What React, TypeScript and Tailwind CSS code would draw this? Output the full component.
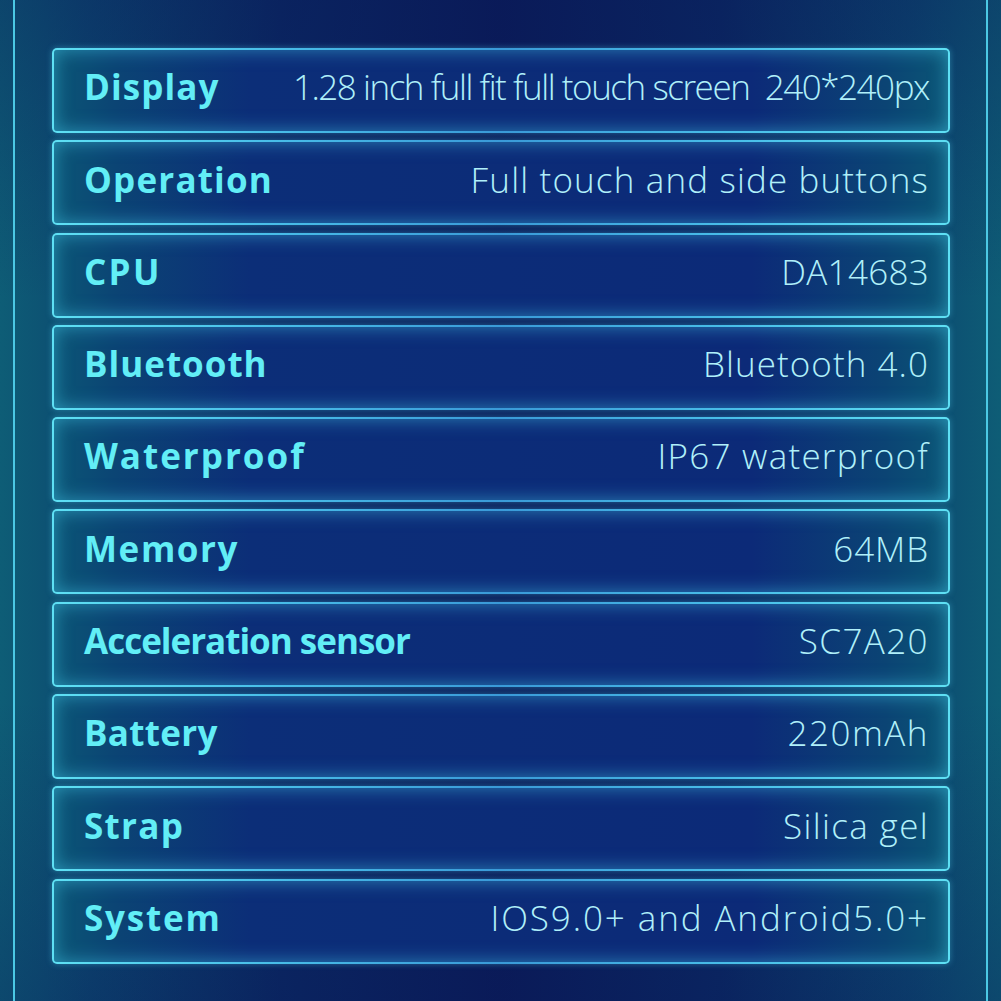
import React from 'react';

// per-row tracking, the source image was pieced together so spacing differs row to row
const specs = [
  { label: 'Display', value: '1.28 inch full fit full touch screen  240*240px', lt: 'tracking-[1.1px]', vt: 'tracking-[-1.45px]' },
  { label: 'Operation', value: 'Full touch and side buttons', lt: 'tracking-[1.2px]', vt: 'tracking-[1.15px]' },
  { label: 'CPU', value: 'DA14683', lt: 'tracking-[2.3px]', vt: 'tracking-[0.3px]' },
  { label: 'Bluetooth', value: 'Bluetooth 4.0', lt: 'tracking-[1px]', vt: 'tracking-[1.05px]' },
  { label: 'Waterproof', value: 'IP67 waterproof', lt: 'tracking-[2px]', vt: 'tracking-[1.25px]' },
  { label: 'Memory', value: '64MB', lt: 'tracking-[1.6px]', vt: 'tracking-[0.9px]' },
  { label: 'Acceleration sensor', value: 'SC7A20', lt: 'tracking-[-1px]', vt: 'tracking-[1.4px]' },
  { label: 'Battery', value: '220mAh', lt: 'tracking-[0.3px]', vt: 'tracking-[1.5px]' },
  { label: 'Strap', value: 'Silica gel', lt: 'tracking-[1.3px]', vt: 'tracking-[1.35px]' },
  { label: 'System', value: 'IOS9.0+ and Android5.0+', lt: 'tracking-[1.8px]', vt: 'tracking-[1.9px]' },
];

const font = { fontFamily: '"Open Sans", "Noto Sans", sans-serif' };

function SpecRow({ label, value, lt, vt }: { label: string; value: string; lt: string; vt: string }) {
  return (
    <div className="h-[85px] flex rounded-[5px] p-[2px] bg-[linear-gradient(to_right,#5ee0f4_0%,#48bde8_25%,#3a9ad8_50%,#48bde8_75%,#5ee0f4_100%)] shadow-[0_0_6px_rgba(80,210,240,0.4)]">
      <div className="flex-1 flex items-center justify-between rounded-[3px] pl-[30px] pr-[19px] pb-[6px] bg-[linear-gradient(to_right,#0b5676_0%,#0b4474_7%,#0c2e78_22%,#0c2a78_78%,#0b4474_93%,#0b5676_100%)] shadow-[inset_0_0_18px_rgba(70,200,235,0.55)]">
        <span className={`text-[35px] font-bold text-[#62eef6] ${lt}`} style={font}>
          {label}
        </span>
        <span className={`text-[35px] font-light text-[#b0f0fa] whitespace-pre ${vt}`} style={font}>
          {value}
        </span>
      </div>
    </div>
  );
}

export default function App() {
  return (
    <div className="w-[1001px] h-[1001px] overflow-hidden bg-[linear-gradient(to_right,#0e5d76_0%,#0c4870_9%,#0a2862_28%,#0a1b58_50%,#0a2862_72%,#0c4870_91%,#0e5d76_100%)]">
      <div className="h-full px-[13px] bg-[linear-gradient(to_bottom,rgba(10,25,90,0.35)_0%,rgba(10,40,100,0)_30%,rgba(10,40,100,0)_70%,rgba(10,25,90,0.3)_100%)]">
        <div className="h-full border-x-2 border-[#4cc8e4] pl-[37px] pr-[36px] pt-[48px] flex flex-col gap-[7.3px]">
          {specs.map((s) => (
            <SpecRow key={s.label} label={s.label} value={s.value} lt={s.lt} vt={s.vt} />
          ))}
        </div>
      </div>
    </div>
  );
}
